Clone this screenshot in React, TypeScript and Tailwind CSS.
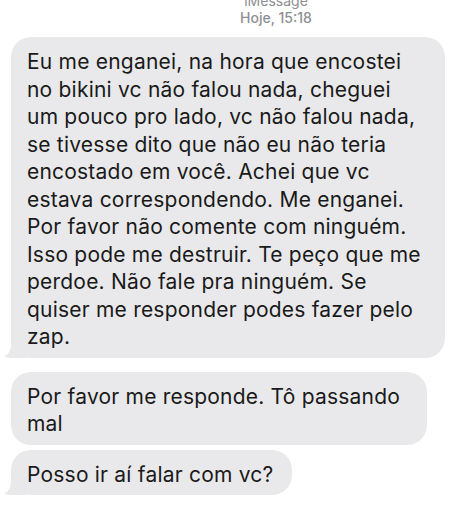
import React from "react";

const firstMessage = [
  "Eu me enganei, na hora que encostei",
  "no bikini vc não falou nada, cheguei",
  "um pouco pro lado, vc não falou nada,",
  "se tivesse dito que não eu não teria",
  "encostado em você. Achei que vc",
  "estava correspondendo. Me enganei.",
  "Por favor não comente com ninguém.",
  "Isso pode me destruir. Te peço que me",
  "perdoe. Não fale pra ninguém. Se",
  "quiser me responder podes fazer pelo",
  "zap.",
];

function Tail() {
  return (
    <svg
      className="absolute -left-[7px] bottom-0"
      width="22"
      height="20"
      viewBox="0 0 22 20"
    >
      <path
        d="M22 0 L22 20 L10 20 C6 20 3 19.5 0 18.5 C4 17 7 13 7 6 L7 0 Z"
        fill="#e9e9eb"
      />
    </svg>
  );
}

function Bubble({
  lines,
  width,
  tail,
}: {
  lines: string[];
  width: string;
  tail?: boolean;
}) {
  return (
    <div className={`relative ${width}`}>
      {tail && <Tail />}
      <div className="relative rounded-[20px] bg-[#e9e9eb] pl-4 pr-3 pt-[11px] pb-[7px]">
        {lines.map((l, i) => (
          <div key={i} className="whitespace-nowrap">
            {l}
          </div>
        ))}
      </div>
    </div>
  );
}

export default function App() {
  return (
    <div
      className="h-[509px] w-[464px] overflow-hidden bg-white text-[#1a1a1a]"
      style={{ fontFamily: 'Inter, "Liberation Sans", Arial, sans-serif' }}
    >
      <div className="-mt-[8px] flex flex-col items-center pl-[88px] text-[14px] leading-[17px] text-[#8e8e93]">
        <div>iMessage</div>
        <div className="font-medium">Hoje, 15:18</div>
      </div>
      <div className="mt-[11px] flex flex-col items-start pl-[11px] text-[21px] leading-[27.5px] tracking-[0.01em]">
        <Bubble lines={firstMessage} width="w-[434px]" tail />
        <div className="mt-[14px]">
          <Bubble
            lines={["Por favor me responde. Tô passando", "mal"]}
            width="w-[416px]"
          />
        </div>
        <div className="mt-[5px]">
          <Bubble lines={["Posso ir aí falar com vc?"]} width="w-[281px]" tail />
        </div>
      </div>
    </div>
  );
}
